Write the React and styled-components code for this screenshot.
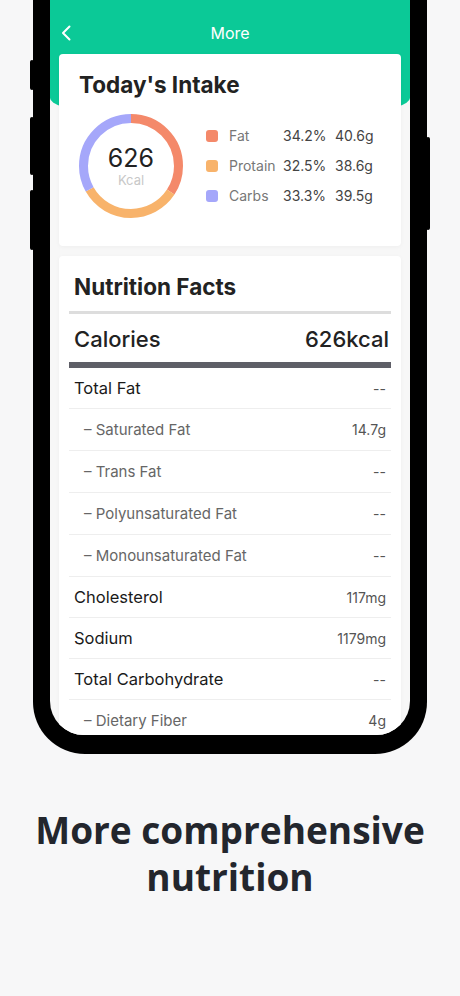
import React from 'react';
import styled, { createGlobalStyle } from 'styled-components';

const GlobalStyle = createGlobalStyle`
  html, body {
    margin: 0;
    padding: 0;
    background: #f7f7f8;
  }
  body {
    font-family: 'Inter', 'Noto Sans', Arial, sans-serif;
    -webkit-font-smoothing: antialiased;
  }
`;

const GREEN = '#0bc997';

const macros = [
  { name: 'Fat', pct: 34.2, grams: '40.6g', color: '#f4896a' },
  { name: 'Protain', pct: 32.5, grams: '38.6g', color: '#f8b36b' },
  { name: 'Carbs', pct: 33.3, grams: '39.5g', color: '#a5a7fa' },
];

const rows = [
  { label: 'Total Fat', value: '--' },
  { label: '– Saturated Fat', value: '14.7g', sub: true },
  { label: '– Trans Fat', value: '--', sub: true },
  { label: '– Polyunsaturated Fat', value: '--', sub: true },
  { label: '– Monounsaturated Fat', value: '--', sub: true },
  { label: 'Cholesterol', value: '117mg' },
  { label: 'Sodium', value: '1179mg' },
  { label: 'Total Carbohydrate', value: '--' },
  { label: '– Dietary Fiber', value: '4g', sub: true },
];

const Donut = () => {
  const r = 47.5;
  const c = 2 * Math.PI * r;
  let offset = 0;
  return (
    <svg width="104" height="104" viewBox="0 0 104 104">
      <g transform="rotate(-90 52 52)">
        {macros.map(m => {
          const len = (m.pct / 100) * c;
          const seg = (
            <circle
              key={m.name}
              cx="52"
              cy="52"
              r={r}
              fill="none"
              stroke={m.color}
              strokeWidth="9"
              strokeDasharray={`${len} ${c - len}`}
              strokeDashoffset={-offset}
            />
          );
          offset += len;
          return seg;
        })}
      </g>
    </svg>
  );
};

const App = () => (
  <Page>
    <GlobalStyle />
    <Phone>
      <SideButton side="left" top={60} height={30} />
      <SideButton side="left" top={117} height={58} />
      <SideButton side="left" top={190} height={60} />
      <SideButton side="right" top={137} height={93} />
      <Screen>
        <Header>
          <BackButton>
            <svg width="10" height="16" viewBox="0 0 10 16">
              <polyline
                points="8.5,1.5 2,8 8.5,14.5"
                fill="none"
                stroke="#fff"
                strokeWidth="2"
                strokeLinecap="round"
                strokeLinejoin="round"
              />
            </svg>
          </BackButton>
          <HeaderTitle>More</HeaderTitle>
        </Header>
        <Content>
          <IntakeCard>
            <CardTitle>Today's Intake</CardTitle>
            <IntakeBody>
              <DonutWrap>
                <Donut />
                <DonutCenter>
                  <Kcal>626</Kcal>
                  <KcalUnit>Kcal</KcalUnit>
                </DonutCenter>
              </DonutWrap>
              <Legend>
                {macros.map(m => (
                  <LegendRow key={m.name}>
                    <Swatch color={m.color} />
                    <LegendName>{m.name}</LegendName>
                    <LegendPct>{m.pct}%</LegendPct>
                    <LegendVal>{m.grams}</LegendVal>
                  </LegendRow>
                ))}
              </Legend>
            </IntakeBody>
          </IntakeCard>
          <FactsCard>
            <FactsTitle>Nutrition Facts</FactsTitle>
            <CaloriesRow>
              <span>Calories</span>
              <span>626kcal</span>
            </CaloriesRow>
            {rows.map(r => (
              <FactRow key={r.label} sub={r.sub}>
                <FactLabel sub={r.sub}>{r.label}</FactLabel>
                <FactValue>{r.value}</FactValue>
              </FactRow>
            ))}
          </FactsCard>
        </Content>
      </Screen>
    </Phone>
    <Caption>
      More comprehensive
      <br />
      nutrition
    </Caption>
  </Page>
);

const Page = styled.div`
  width: 460px;
  height: 996px;
  overflow: hidden;
  display: flex;
  flex-direction: column;
  align-items: center;
`;

const Phone = styled.div`
  position: relative;
  width: 360px;
  padding: 0 17px 19px;
  background: #000;
  border-radius: 0 0 52px 52px;
`;

const SideButton = styled.div`
  position: absolute;
  top: ${p => p.top}px;
  height: ${p => p.height}px;
  width: 4px;
  background: #000;
  border-radius: 2px;
  ${p => (p.side === 'left' ? 'left: -3px;' : 'right: -3px;')}
`;

const Screen = styled.div`
  height: 735px;
  background: #f7f7f7;
  border-radius: 0 0 34px 34px;
  overflow: hidden;
`;

const Header = styled.div`
  position: relative;
  height: 122px;
  background: ${GREEN};
  border-radius: 0 0 50% 50% / 0 0 24px 24px;
  display: flex;
  justify-content: center;
  padding-top: 22px;
  box-sizing: border-box;
`;

const BackButton = styled.div`
  position: absolute;
  left: 11px;
  top: 25px;
  display: flex;
`;

const HeaderTitle = styled.div`
  color: #fff;
  font-size: 16px;
  line-height: 22px;
  height: 22px;
`;

const Content = styled.div`
  position: relative;
  z-index: 1;
  margin-top: -68px;
  padding: 0 9px;
  display: flex;
  flex-direction: column;
  gap: 10px;
`;

const Card = styled.div`
  background: #fff;
  border-radius: 4px;
  box-shadow: 0 1px 4px rgba(0, 0, 0, 0.04);
`;

const IntakeCard = styled(Card)`
  height: 192px;
  box-sizing: border-box;
  padding: 18px 20px 0;
`;

const CardTitle = styled.div`
  font-size: 22.5px;
  line-height: 26px;
  font-weight: 700;
  color: #222;
`;

const IntakeBody = styled.div`
  display: flex;
  align-items: center;
  gap: 23px;
  margin-top: 16px;
`;

const DonutWrap = styled.div`
  position: relative;
  width: 104px;
  height: 104px;
  svg {
    display: block;
  }
`;

const DonutCenter = styled.div`
  position: absolute;
  inset: 0;
  display: flex;
  flex-direction: column;
  align-items: center;
  justify-content: center;
  padding-bottom: 3px;
`;

const Kcal = styled.div`
  font-size: 25px;
  line-height: 30px;
  color: #222;
`;

const KcalUnit = styled.div`
  font-size: 13px;
  line-height: 14px;
  color: #c8c8c8;
`;

const Legend = styled.div`
  display: flex;
  flex-direction: column;
  gap: 12px;
`;

const LegendRow = styled.div`
  display: flex;
  align-items: center;
  height: 18px;
  line-height: 18px;
  font-size: 14px;
`;

const Swatch = styled.div`
  width: 12px;
  height: 12px;
  border-radius: 3px;
  background: ${p => p.color};
  margin-right: 11px;
`;

const LegendName = styled.div`
  width: 54px;
  color: #777;
`;

const LegendPct = styled.div`
  width: 52px;
  color: #444;
`;

const LegendVal = styled.div`
  color: #444;
`;

const FactsCard = styled(Card)`
  padding: 18px 10px 0;
`;

const FactsTitle = styled.div`
  font-size: 22.5px;
  line-height: 26px;
  font-weight: 700;
  color: #222;
  padding: 0 5px 11px;
  border-bottom: 3px solid #dddddd;
`;

const CaloriesRow = styled.div`
  display: flex;
  justify-content: space-between;
  align-items: center;
  height: 46px;
  padding: 2px 2px 0 5px;
  font-size: 22px;
  font-weight: 500;
  color: #222;
  border-bottom: 6px solid #5e5f67;
`;

const FactRow = styled.div`
  display: flex;
  justify-content: space-between;
  align-items: center;
  height: ${p => (p.sub ? 41 : 40)}px;
  padding: 0 5px;
  border-bottom: 1px solid #eeeeee;
`;

const FactLabel = styled.div`
  font-size: ${p => (p.sub ? 15 : 16.5)}px;
  font-weight: 400;
  color: ${p => (p.sub ? '#666' : '#1a1a1a')};
  padding-left: ${p => (p.sub ? 10 : 0)}px;
`;

const FactValue = styled.div`
  font-size: 14px;
  color: #555;
`;

const Caption = styled.div`
  margin-top: 52px;
  text-align: center;
  font-family: 'Open Sans', 'Noto Sans', sans-serif;
  font-weight: 700;
  font-size: 37px;
  line-height: 47px;
  color: #23262d;
`;

export default App;
